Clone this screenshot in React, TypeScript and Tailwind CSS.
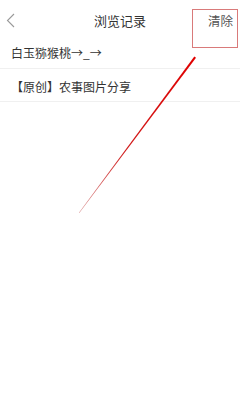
const history = [
  { id: 1, title: "白玉猕猴桃→_→", pt: "pt-[4px]", pb: "pb-[7px]" },
  { id: 2, title: "【原创】农事图片分享", pt: "pt-[10px]", pb: "pb-[6px]" },
];

const App = () => {
  return (
    <div
      className="relative w-[240px] h-[400px] bg-white overflow-hidden text-[#333]"
      style={{ fontFamily: '"Noto Sans CJK SC", "Noto Sans", sans-serif' }}
    >
      {/* Header */}
      <div className="relative h-[41px] flex items-center justify-center">
        <svg className="absolute left-[6px] top-[13px]" width="10" height="15" viewBox="0 0 10 15">
          <polyline points="8,1 1.5,7.5 8,14" fill="none" stroke="#999" strokeWidth="1.1" />
        </svg>
        <span className="text-[13px] leading-[16px] text-[#333]">浏览记录</span>
        <span className="absolute right-[7px] top-[13px] text-[12.5px] leading-[16px] text-[#555]">清除</span>
      </div>

      {/* History list */}
      <div className="flex flex-col">
        {history.map((item) => (
          <div key={item.id} className={`px-[11px] ${item.pt} ${item.pb} border-b border-[#f0f0f0]`}>
            <p className="text-[12px] leading-[16px] whitespace-nowrap">{item.title}</p>
          </div>
        ))}
      </div>

      {/* Annotation: red box around clear button */}
      <div className="absolute left-[192px] top-[9px] w-[46px] h-[39px] border border-[#d97a7a]" />

      {/* Annotation: arrow line */}
      <svg className="absolute left-0 top-0 pointer-events-none" width="240" height="400" viewBox="0 0 240 400">
        <defs>
          <linearGradient id="fade" x1="195" y1="57" x2="79" y2="213" gradientUnits="userSpaceOnUse">
            <stop offset="0" stopColor="#e00000" />
            <stop offset="0.6" stopColor="#d01a1a" />
            <stop offset="1" stopColor="#d89090" />
          </linearGradient>
        </defs>
        <polygon points="194.3,56.5 196,57.8 79.3,213 78.9,212.7" fill="url(#fade)" />
      </svg>
    </div>
  );
};

export default App;
